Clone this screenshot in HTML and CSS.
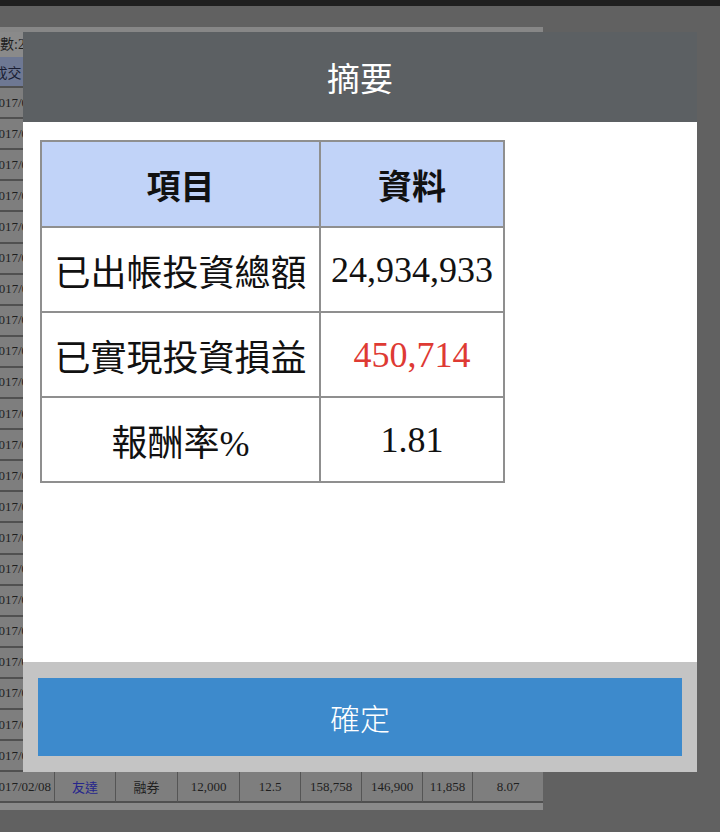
FILE: index.html
```html
<!DOCTYPE html>
<html lang="zh-Hant">
<head>
<meta charset="utf-8">
<title>摘要</title>
<link rel="stylesheet" href="styles.css">
</head>
<body>
<div class="page">
  <div class="topbar"></div>
  <div class="panel">
    <div class="strip"></div>
    <div class="count">筆數:23</div>
    <table class="grid">
      <thead>
        <tr><th class="c1">成交日期</th><th class="c2">股票</th><th class="c3">類別</th><th class="c4">股數</th><th class="c5">價格</th><th class="c6">成本</th><th class="c7">收入</th><th class="c8">損益</th><th class="c9">報酬率%</th></tr>
      </thead>
      <tbody>
        <tr><td>2017/01/03</td><td class="lk">台積電</td><td>現股</td><td>1,000</td><td>181</td><td>181,258</td><td>185,500</td><td>4,242</td><td>2.34</td></tr>
        <tr><td>2017/01/04</td><td class="lk">鴻海</td><td>現股</td><td>2,000</td><td>83.5</td><td>167,238</td><td>170,200</td><td>2,962</td><td>1.77</td></tr>
        <tr><td>2017/01/05</td><td class="lk">聯發科</td><td>現股</td><td>1,000</td><td>213</td><td>213,303</td><td>218,000</td><td>4,697</td><td>2.20</td></tr>
        <tr><td>2017/01/06</td><td class="lk">中鋼</td><td>融資</td><td>5,000</td><td>24.6</td><td>123,175</td><td>125,500</td><td>2,325</td><td>1.89</td></tr>
        <tr><td>2017/01/09</td><td class="lk">台塑</td><td>現股</td><td>2,000</td><td>88.2</td><td>176,651</td><td>179,000</td><td>2,349</td><td>1.33</td></tr>
        <tr><td>2017/01/10</td><td class="lk">國泰金</td><td>現股</td><td>3,000</td><td>47.3</td><td>142,102</td><td>144,300</td><td>2,198</td><td>1.55</td></tr>
        <tr><td>2017/01/11</td><td class="lk">富邦金</td><td>融資</td><td>3,000</td><td>51.2</td><td>153,818</td><td>156,600</td><td>2,782</td><td>1.81</td></tr>
        <tr><td>2017/01/12</td><td class="lk">統一</td><td>現股</td><td>2,000</td><td>56.8</td><td>113,762</td><td>115,400</td><td>1,638</td><td>1.44</td></tr>
        <tr><td>2017/01/13</td><td class="lk">大立光</td><td>現股</td><td>100</td><td>3,910</td><td>391,557</td><td>398,000</td><td>6,443</td><td>1.65</td></tr>
        <tr><td>2017/01/16</td><td class="lk">廣達</td><td>融券</td><td>3,000</td><td>62.1</td><td>186,565</td><td>183,900</td><td>2,665</td><td>1.43</td></tr>
        <tr><td>2017/01/17</td><td class="lk">仁寶</td><td>現股</td><td>8,000</td><td>18.5</td><td>148,211</td><td>150,400</td><td>2,189</td><td>1.48</td></tr>
        <tr><td>2017/01/18</td><td class="lk">華碩</td><td>現股</td><td>500</td><td>283</td><td>141,701</td><td>144,000</td><td>2,299</td><td>1.62</td></tr>
        <tr><td>2017/01/19</td><td class="lk">日月光</td><td>融資</td><td>4,000</td><td>33.4</td><td>133,790</td><td>136,000</td><td>2,210</td><td>1.65</td></tr>
        <tr><td>2017/01/20</td><td class="lk">中華電</td><td>現股</td><td>1,000</td><td>102</td><td>102,145</td><td>103,500</td><td>1,355</td><td>1.33</td></tr>
        <tr><td>2017/01/23</td><td class="lk">台達電</td><td>現股</td><td>1,000</td><td>161</td><td>161,229</td><td>164,000</td><td>2,771</td><td>1.72</td></tr>
        <tr><td>2017/01/24</td><td class="lk">兆豐金</td><td>現股</td><td>5,000</td><td>24.3</td><td>121,673</td><td>123,000</td><td>1,327</td><td>1.09</td></tr>
        <tr><td>2017/01/25</td><td class="lk">南亞</td><td>融資</td><td>2,000</td><td>68.9</td><td>137,996</td><td>140,200</td><td>2,204</td><td>1.60</td></tr>
        <tr><td>2017/02/02</td><td class="lk">可成</td><td>現股</td><td>500</td><td>324</td><td>162,231</td><td>166,000</td><td>3,769</td><td>2.32</td></tr>
        <tr><td>2017/02/03</td><td class="lk">聯電</td><td>現股</td><td>10,000</td><td>11.4</td><td>114,162</td><td>115,800</td><td>1,638</td><td>1.43</td></tr>
        <tr><td>2017/02/06</td><td class="lk">玉山金</td><td>現股</td><td>6,000</td><td>18.7</td><td>112,359</td><td>114,000</td><td>1,641</td><td>1.46</td></tr>
        <tr><td>2017/02/07</td><td class="lk">華南金</td><td>融資</td><td>7,000</td><td>16.2</td><td>113,561</td><td>115,100</td><td>1,539</td><td>1.35</td></tr>
        <tr><td>2017/02/08</td><td class="lk">群創</td><td>融券</td><td>15,000</td><td>10.3</td><td>154,770</td><td>152,100</td><td>2,670</td><td>1.72</td></tr>
        <tr><td>2017/02/08</td><td class="lk">友達</td><td>融券</td><td>12,000</td><td>12.5</td><td>158,758</td><td>146,900</td><td>11,858</td><td>8.07</td></tr>
      </tbody>
    </table>
    <div class="scrollbar"></div>
  </div>
</div>

<div class="modal">
  <div class="modal-head">摘要</div>
  <div class="modal-body">
    <table class="summary">
      <thead>
        <tr><th class="s-label">項目</th><th class="s-value">資料</th></tr>
      </thead>
      <tbody>
        <tr><td class="s-label">已出帳投資總額</td><td class="s-value">24,934,933</td></tr>
        <tr><td class="s-label">已實現投資損益</td><td class="s-value neg">450,714</td></tr>
        <tr><td class="s-label">報酬率%</td><td class="s-value">1.81</td></tr>
      </tbody>
    </table>
  </div>
  <div class="modal-foot">
    <button class="ok" type="button">確定</button>
  </div>
</div>
</body>
</html>
```

FILE: styles.css
```css
html, body {
  margin: 0;
  padding: 0;
}

body {
  width: 720px;
  height: 832px;
  overflow: hidden;
  background: #616161;
  font-family: "Liberation Serif", "Noto Sans CJK TC", serif;
  position: relative;
}

.page {
  display: flex;
  flex-direction: column;
}

.topbar {
  height: 6px;
  background: #1f1f1f;
}

.panel {
  margin-top: 21px;
  width: 543px;
  overflow: hidden;
  display: flex;
  flex-direction: column;
}

.strip {
  height: 5px;
  background: #878787;
}

.count {
  height: 25px;
  line-height: 25px;
  background: #8a8a8a;
  color: #1e1e1e;
  font-size: 14px;
  margin-left: -14px;
  white-space: nowrap;
}

.grid {
  border-collapse: separate;
  border-spacing: 0;
  margin-left: -11px;
  width: 554px;
  table-layout: fixed;
  font-size: 13px;
  color: #1e1e1e;
}

.grid th,
.grid td {
  box-sizing: border-box;
  height: 31.1px;
  padding: 0;
  text-align: center;
  white-space: nowrap;
  overflow: hidden;
  border-right: 1.5px solid #555555;
  border-bottom: 2px solid #505050;
  background: #7e7e7e;
  font-weight: normal;
}

.grid th {
  background: #6e7893;
  color: #1a1e33;
  font-size: 14px;
}

.grid .c1 { width: 66px; }
.grid .c2 { width: 61px; }
.grid .c3 { width: 62px; }
.grid .c4 { width: 62px; }
.grid .c5 { width: 61px; }
.grid .c6 { width: 61px; }
.grid .c7 { width: 61px; }
.grid .c8 { width: 50px; }
.grid .c9 { width: 70px; }

.grid td:last-child,
.grid th:last-child {
  border-right: none;
}

.grid td.lk {
  color: #26268c;
}

.scrollbar {
  height: 7px;
  background: #8a8a8a;
}

/* Modal (overlays the page) */
.modal {
  position: absolute;
  left: 23px;
  top: 32px;
  width: 674px;
  display: flex;
  flex-direction: column;
  background: #ffffff;
}

.modal-head {
  height: 90px;
  background: #5c6063;
  color: #ffffff;
  font-family: "Noto Sans CJK TC", sans-serif;
  font-size: 33px;
  display: flex;
  align-items: center;
  justify-content: center;
}

.modal-body {
  height: 540px;
  box-sizing: border-box;
  padding: 18px 17px;
  background: #ffffff;
}

.summary {
  border-collapse: collapse;
  width: 465px;
  table-layout: fixed;
  border: 2px solid #7a7a7a;
}

.summary th,
.summary td {
  border: 2px solid #8f8f8f;
  padding: 0;
  text-align: center;
  color: #111111;
}

.summary th {
  height: 84px;
  background: #c1d3f8;
  font-family: "Noto Sans CJK TC", sans-serif;
  font-weight: 700;
  font-size: 34px;
}

.summary td {
  height: 83px;
}

.summary .s-label {
  width: 277px;
}

.summary td.s-label {
  font-family: "Liberation Serif", "Noto Sans CJK TC", serif;
  font-size: 36px;
}

.summary td.s-value {
  font-family: "Liberation Serif", serif;
  font-size: 36px;
}

.summary td.neg {
  color: #de3a33;
}

.modal-foot {
  height: 110px;
  box-sizing: border-box;
  padding: 16px 15px;
  background: #c4c4c4;
  display: flex;
}

.ok {
  flex: 1;
  border: none;
  margin: 0;
  background: #3d8acc;
  color: #ffffff;
  font-family: "Noto Sans CJK TC", sans-serif;
  font-size: 30px;
  font-weight: 300;
}
```
